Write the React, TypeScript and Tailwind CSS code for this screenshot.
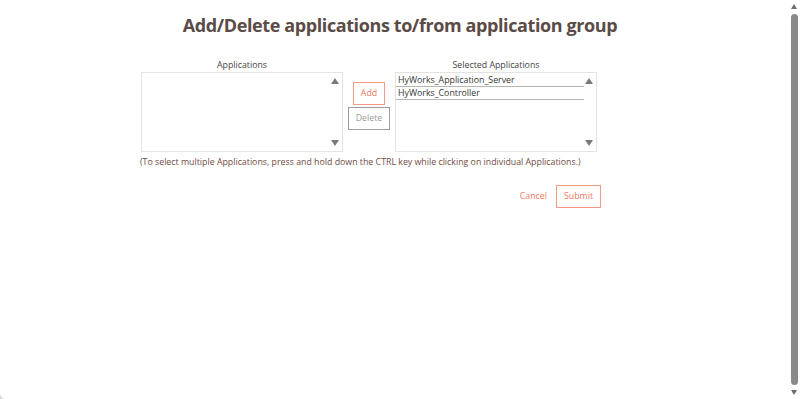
import React from 'react';

const font = { fontFamily: '"Open Sans", "Noto Sans", sans-serif' };

const ListBox: React.FC<{ items: string[] }> = ({ items }) => (
  <div className="relative w-[202px] h-[80px] border border-[#e3e3e3] bg-white">
    <div className="w-[188px] pt-[1px]">
      {items.map((item) => (
        <div key={item} className="h-[13px] pl-[2px] border-b-[1.5px] border-[#b5b5b5] text-[8.8px] leading-[12px] text-[#333]">
          {item}
        </div>
      ))}
    </div>
    {/* list scroll arrows */}
    <div className="absolute right-[3px] top-[5px] w-0 h-0 border-l-[4px] border-l-transparent border-r-[4px] border-r-transparent border-b-[6px] border-b-[#7a7a7a]" />
    <div className="absolute right-[3px] bottom-[5px] w-0 h-0 border-l-[4px] border-l-transparent border-r-[4px] border-r-transparent border-t-[6px] border-t-[#7a7a7a]" />
  </div>
);

export default function App() {
  return (
    <div className="w-[800px] h-[399px] bg-[#d9d9d9] overflow-hidden" style={font}>
      <div className="flex h-full bg-white rounded-b-[6px]">
        <div className="flex-1">
          <h1 className="text-center pt-[12px] pl-[11px] text-[18px] leading-[26px] tracking-[-0.4px] font-bold text-[#5b4b47]">
            Add/Delete applications to/from application group
          </h1>

          <div className="ml-[141px] mt-[21px] w-[460px]">
            <div className="flex items-start">
              <div className="flex flex-col items-center">
                <div className="text-[8.8px] leading-[12px] text-[#444] mb-[1px]">Applications</div>
                <ListBox items={[]} />
              </div>

              <div className="flex flex-col items-center w-[52px] pt-[23px]">
                <button className="w-[32px] h-[23px] border border-[#f29a85] text-[8.8px] text-[#f0785e] bg-white">Add</button>
                <button className="mt-[2px] w-[42px] h-[23px] border border-[#9c9c9c] text-[8.8px] text-[#9a9a9a] bg-white">Delete</button>
              </div>

              <div className="flex flex-col items-center">
                <div className="text-[8.8px] leading-[12px] text-[#444] mb-[1px]">Selected Applications</div>
                <ListBox items={['HyWorks_Application_Server', 'HyWorks_Controller']} />
              </div>
            </div>

            <p className="mt-[3px] -ml-[1px] whitespace-nowrap text-[8.8px] leading-[14px] text-[#6f4b43]">
              (To select multiple Applications, press and hold down the CTRL key while clicking on individual Applications.)
            </p>

            <div className="flex justify-end items-center gap-[9px] mt-[16px]">
              <button className="text-[8.8px] text-[#f0785e]">Cancel</button>
              <button className="w-[45px] h-[23px] border border-[#f29a85] text-[8.8px] text-[#f0785e] bg-white">Submit</button>
            </div>
          </div>
        </div>

        {/* page scrollbar */}
        <div className="relative w-[11px] h-full bg-white">
          <div className="absolute left-[2px] top-[4px] w-0 h-0 border-l-[3.5px] border-l-transparent border-r-[3.5px] border-r-transparent border-b-[5px] border-b-[#6e6e6e]" />
          <div className="absolute left-[2px] top-[14px] bottom-[14px] w-[7px] rounded-full bg-[#8a8a8a]" />
          <div className="absolute left-[2px] bottom-[4px] w-0 h-0 border-l-[3.5px] border-l-transparent border-r-[3.5px] border-r-transparent border-t-[5px] border-t-[#6e6e6e]" />
        </div>
      </div>
    </div>
  );
}
